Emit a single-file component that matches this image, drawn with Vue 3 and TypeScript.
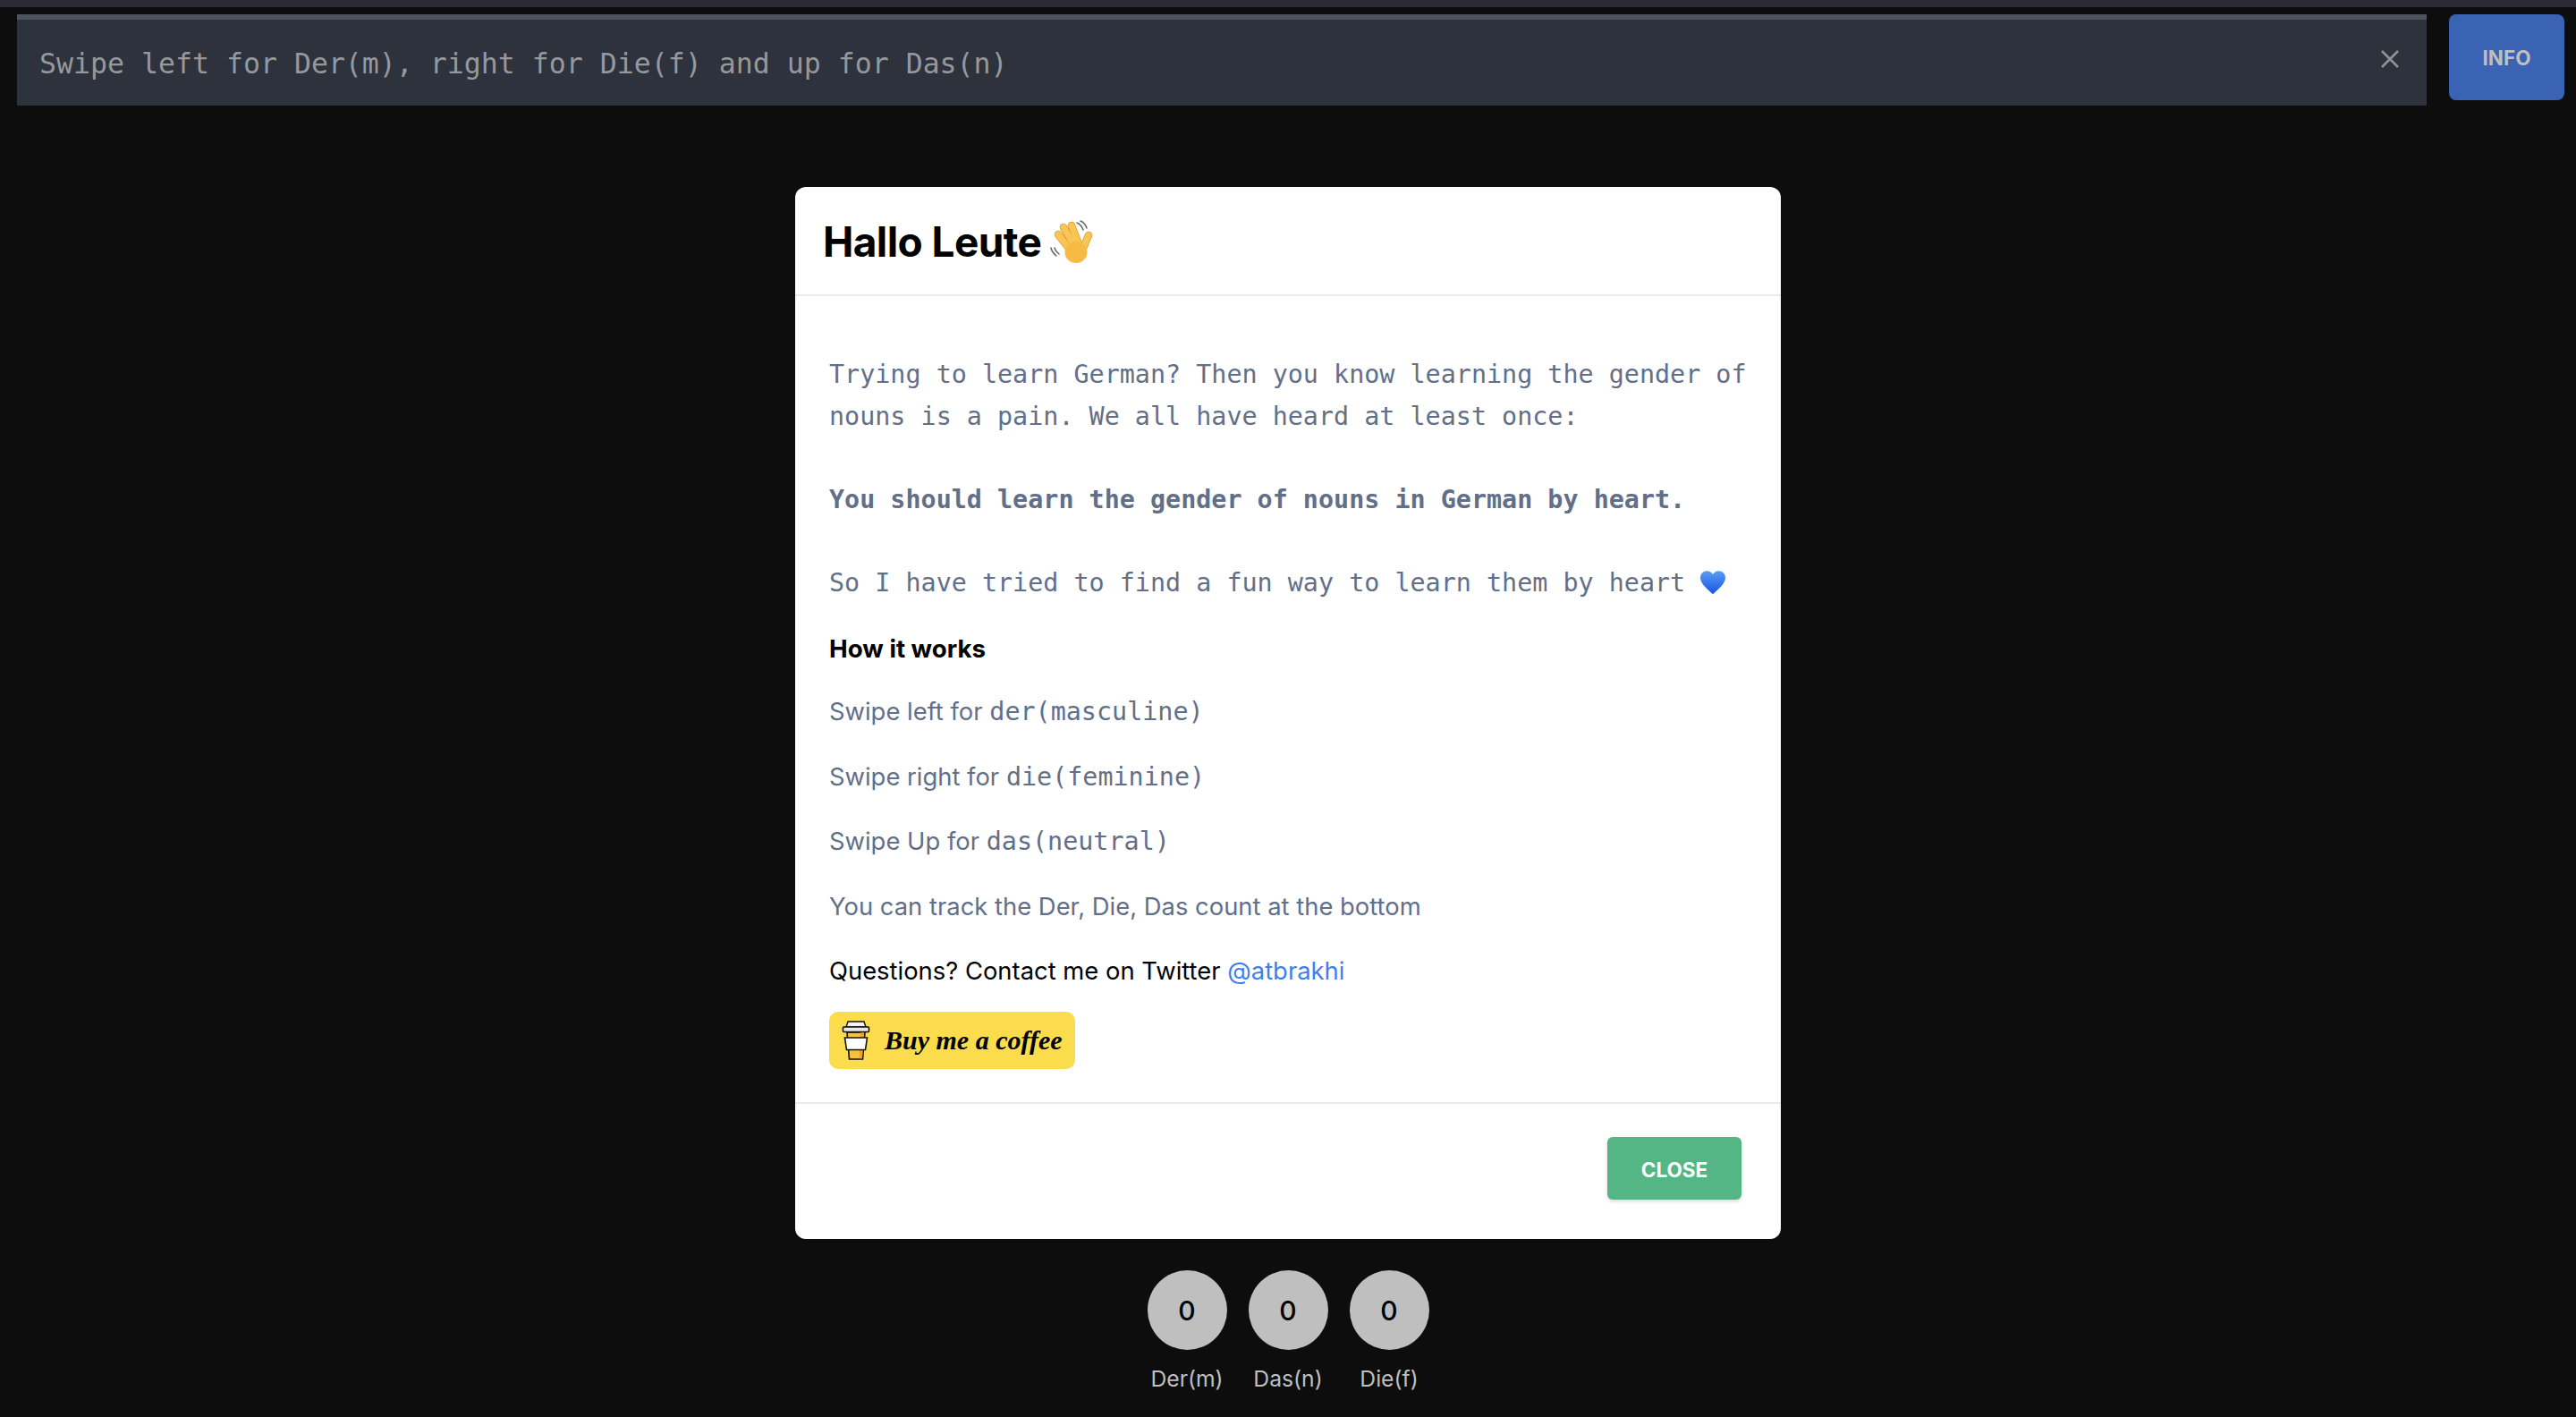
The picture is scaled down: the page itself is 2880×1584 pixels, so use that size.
<script setup lang="ts">
const counters = [
  { label: "Der(m)", count: 0 },
  { label: "Das(n)", count: 0 },
  { label: "Die(f)", count: 0 },
];

// fingers of the waving hand, tip to base
const fingers = [
  { x1: 22, y1: 22, x2: 37, y2: 41 },
  { x1: 28, y1: 14, x2: 41, y2: 36 },
  { x1: 37, y1: 12, x2: 45, y2: 33 },
  { x1: 56, y1: 23, x2: 49, y2: 40 },
];
</script>

<template>
  <div class="page">
    <div class="strip"></div>
    <header class="top">
      <div class="alert">
        <span class="alert-text">Swipe left for Der(m), right for Die(f) and up for Das(n)</span>
        <svg class="alert-close" viewBox="0 0 20 20" width="20" height="20">
          <path d="M1 1 L19 19 M19 1 L1 19" stroke="#8f9195" stroke-width="2.600" fill="none" />
        </svg>
      </div>
      <button class="info">INFO</button>
    </header>

    <main class="modal">
      <div class="modal-head">
        <h2>Hallo Leute</h2>
        <svg class="wave" viewBox="12 5 50 52" width="50" height="52">
          <g stroke="#dd9a2c" stroke-width="8.500" stroke-linecap="round">
            <line v-for="f in fingers" :key="f.x1" :x1="f.x1" :y1="f.y1" :x2="f.x2" :y2="f.y2" />
          </g>
          <g stroke="#f8c655" stroke-width="7" stroke-linecap="round">
            <line v-for="f in fingers" :key="f.x1" :x1="f.x1" :y1="f.y1" :x2="f.x2" :y2="f.y2" />
          </g>
          <ellipse cx="42" cy="42" rx="12.500" ry="12" fill="#f6bb45" />
          <g stroke="#666" stroke-width="1.500" fill="none" stroke-linecap="round">
            <path d="M43 9 Q48 11 50 17 M47 7 Q52 9 54 15" />
            <path d="M14 37 Q15 42 20 46 M18 37 Q19 41 23 44" />
          </g>
        </svg>
      </div>

      <div class="modal-body">
        <div class="intro">
          <p>Trying to learn German? Then you know learning the gender of nouns is a pain. We all have heard at least once:</p>
          <p class="strong">You should learn the gender of nouns in German by heart.</p>
          <p class="last">
            So I have tried to find a fun way to learn them by heart
            <svg class="heart" viewBox="1 1 26 24.500" width="28" height="27">
              <defs>
                <linearGradient id="heartFill" x1="0" y1="0" x2="0" y2="1">
                  <stop offset="0" stop-color="#5a9bf6" />
                  <stop offset="1" stop-color="#1a56e0" />
                </linearGradient>
              </defs>
              <path d="M14 25 C8 20 1 14 1 8 C1 3.500 4.500 1 8 1 C10.500 1 12.800 2.300 14 4.500 C15.200 2.300 17.500 1 20 1 C23.500 1 27 3.500 27 8 C27 14 20 20 14 25 Z" fill="url(#heartFill)" />
            </svg>
          </p>
        </div>
        <h3>How it works</h3>
        <p class="row">Swipe left for <code>der(masculine)</code></p>
        <p class="row">Swipe right for <code>die(feminine)</code></p>
        <p class="row">Swipe Up for <code>das(neutral)</code></p>
        <p class="row">You can track the Der, Die, Das count at the bottom</p>
        <p class="row contact">Questions? Contact me on Twitter <a href="#">@atbrakhi</a></p>
        <a class="coffee" href="#">
          <svg viewBox="0 0 32 46" width="32" height="46">
            <path d="M6 14 H26 L23.500 44 H8.500 Z" fill="#f6c23c" stroke="#111" stroke-width="1.600" />
            <path d="M21 14 H25.200 L23 43.200 H19.500 Z" fill="#f2a02e" />
            <path d="M3.500 20 H28.500 L26.500 33.500 H5.500 Z" fill="#fff" stroke="#111" stroke-width="1.600" />
            <path d="M7 2 H25 L27 8 H5 Z" fill="#f2f2f2" stroke="#111" stroke-width="1.400" />
            <rect x="1.500" y="8" width="29" height="5.500" rx="1" fill="#e8e8e8" stroke="#111" stroke-width="1.600" />
          </svg>
          <span>Buy me a coffee</span>
        </a>
      </div>

      <div class="modal-foot">
        <button class="close">CLOSE</button>
      </div>
    </main>

    <section class="counters">
      <div v-for="c in counters" :key="c.label" class="counter">
        <div class="circle">{{ c.count }}</div>
        <div class="label">{{ c.label }}</div>
      </div>
    </section>
  </div>
</template>

<style scoped>
.page {
  width: 2880px;
  height: 1584px;
  overflow: hidden;
  background: #0d0d0d;
  font-family: Inter, "Noto Sans", sans-serif;
  display: flex;
  flex-direction: column;
  align-items: center;
}
.strip {
  width: 100%;
  height: 8px;
  background: #2b2a35;
  flex-shrink: 0;
}
.top {
  width: 100%;
  box-sizing: border-box;
  padding: 8px 13px 0 19px;
  display: flex;
  align-items: flex-start;
  gap: 25px;
}
.alert {
  flex: 1;
  height: 102px;
  box-sizing: border-box;
  background: #2d323d;
  border-top: 6px solid #4e525c;
  display: flex;
  align-items: center;
  justify-content: space-between;
  padding: 0 31px 0 25px;
}
.alert-text {
  font-family: "DejaVu Sans Mono", monospace;
  font-size: 31.550px;
  color: #96989c;
  padding-top: 1px;
}
.alert-close {
  margin-bottom: 8px;
}
.info {
  width: 129px;
  height: 96px;
  border: 0;
  border-radius: 8px;
  background: #3b63b3;
  color: #bfbfbf;
  font-family: inherit;
  font-size: 22.500px;
  font-weight: 700;
}
.modal {
  margin-top: 91px;
  width: 1102px;
  height: 1176px;
  background: #fff;
  border-radius: 12px;
  display: flex;
  flex-direction: column;
  flex-shrink: 0;
}
.modal-head {
  height: 122px;
  box-sizing: border-box;
  border-bottom: 2px solid #e8eaee;
  padding: 2px 31px 0;
  display: flex;
  align-items: center;
  gap: 9px;
}
.modal-head h2 {
  margin: 0;
  font-size: 46px;
  font-weight: 700;
  color: #000;
  letter-spacing: -0.6px;
}
.wave {
  margin-top: 2px;
}
.modal-body {
  flex: 1;
  padding: 0 38px;
  font-size: 27.400px;
  color: #626f89;
}
.intro {
  font-family: "DejaVu Sans Mono", monospace;
  font-size: 28.400px;
  line-height: 47px;
  padding-top: 64px;
}
.intro p {
  margin: 0 0 46px;
}
.intro .strong {
  font-weight: 700;
}
.intro .last {
  margin: 0;
}
.heart {
  vertical-align: -4px;
}
h3 {
  margin: 30px 0 0;
  font-size: 27.700px;
  line-height: 40px;
  font-weight: 700;
  color: #000;
}
.row {
  margin: 27.750px 0 0;
  line-height: 44px;
}
.row code {
  font-family: "DejaVu Sans Mono", monospace;
  font-size: 28.400px;
}
.contact {
  color: #000;
}
.contact a {
  color: #3f7ff0;
  text-decoration: none;
}
.coffee {
  margin-top: 24px;
  width: 275px;
  height: 64px;
  box-sizing: border-box;
  background: #fadc4c;
  border-radius: 10px;
  display: flex;
  align-items: center;
  padding-left: 14px;
  gap: 16px;
  text-decoration: none;
}
.coffee span {
  font-family: "Liberation Serif", serif;
  font-style: italic;
  font-weight: 700;
  font-size: 30px;
  white-space: nowrap;
  color: #000;
}
.modal-foot {
  height: 153px;
  box-sizing: border-box;
  border-top: 2px solid #e8eaee;
  padding: 37px 44px 0 0;
  display: flex;
  justify-content: flex-end;
  align-items: flex-start;
}
.close {
  width: 150px;
  height: 70px;
  border: 0;
  border-radius: 6px;
  background: #55b685;
  color: #fff;
  font-family: inherit;
  font-size: 22.500px;
  font-weight: 700;
  padding-top: 3px;
  box-shadow: 0 2px 4px rgba(0, 0, 0, 0.15);
}
.counters {
  margin-top: 35px;
  display: flex;
  gap: 24px;
}
.counter {
  width: 89px;
  display: flex;
  flex-direction: column;
  align-items: center;
}
.circle {
  width: 89px;
  height: 89px;
  border-radius: 50%;
  background: #bfbfbf;
  color: #000;
  font-size: 30px;
  font-weight: 500;
  display: flex;
  align-items: center;
  justify-content: center;
}
.label {
  margin-top: 12px;
  font-size: 24.700px;
  line-height: 40px;
  color: #bfbfbf;
  white-space: nowrap;
}
</style>

<style>
body {
  margin: 0;
  background: #0d0d0d;
}
</style>
